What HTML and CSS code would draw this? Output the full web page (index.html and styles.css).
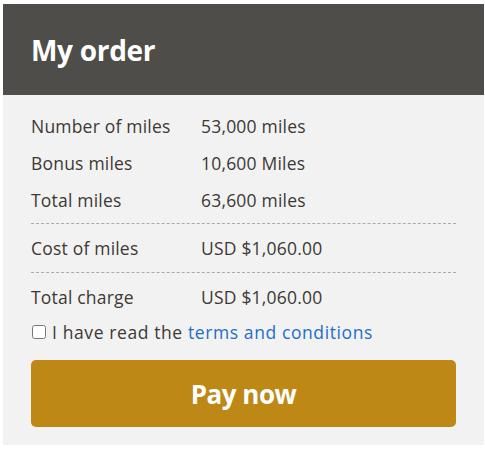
FILE: index.html
```html
<!DOCTYPE html>
<html>
<head>
<meta charset="utf-8">
<link rel="stylesheet" href="styles.css">
</head>
<body>
<div class="order">
  <div class="order-header"><h1 class="order-title">My order</h1></div>
  <div class="order-body">
    <div class="group first">
      <div class="row"><span class="label">Number of miles</span><span class="value">53,000 miles</span></div>
      <div class="row"><span class="label">Bonus miles</span><span class="value">10,600 Miles</span></div>
      <div class="row"><span class="label">Total miles</span><span class="value">63,600 miles</span></div>
    </div>
    <div class="group">
      <div class="row"><span class="label">Cost of miles</span><span class="value">USD $1,060.00</span></div>
    </div>
    <div class="group last">
      <div class="row"><span class="label">Total charge</span><span class="value">USD $1,060.00</span></div>
    </div>
    <label class="terms"><input type="checkbox" class="check"><span>I have read the <a href="#" class="link">terms and conditions</a></span></label>
    <button class="pay">Pay now</button>
  </div>
</div>
</body>
</html>
```
FILE: styles.css
```css
html, body { margin: 0; padding: 0; background: #fff; }
body { padding: 4px 1px 0 3px; font-family: "Open Sans", "DejaVu Sans", sans-serif; color: #3d3935; }
.order { width: 481px; }
.order-header { background: #4f4d4a; height: 91px; display: flex; align-items: center; padding: 0 28px; box-sizing: border-box; }
.order-title { margin: 0; color: #fff; font-size: 28px; font-weight: 700; letter-spacing: -0.3px; }
.order-body { background: #f2f2f2; padding: 12px 28px 18px 28px; }
.group { border-bottom: 1px dashed #aaa; padding: 5.5px 0; }
.group.first { padding-top: 0; padding-bottom: 5px; }
.group.last { border-bottom: none; padding-bottom: 0; padding-top: 5px; }
.row { display: flex; height: 37px; align-items: center; font-size: 17.5px; letter-spacing: 0.2px; }
.label { width: 170px; }
.terms { display: flex; align-items: center; height: 34px; font-size: 17.5px; letter-spacing: 0.6px; }
.check { margin: 0 6px 0 1px; width: 14px; height: 14px; }
.link { color: #1c6fc9; text-decoration: none; }
.pay { display: block; width: 100%; height: 67px; margin-top: 11px; background: #bd8815; color: #fff; border: none; border-radius: 5px; font-family: inherit; font-size: 26px; font-weight: 700; letter-spacing: -0.5px; }
```
